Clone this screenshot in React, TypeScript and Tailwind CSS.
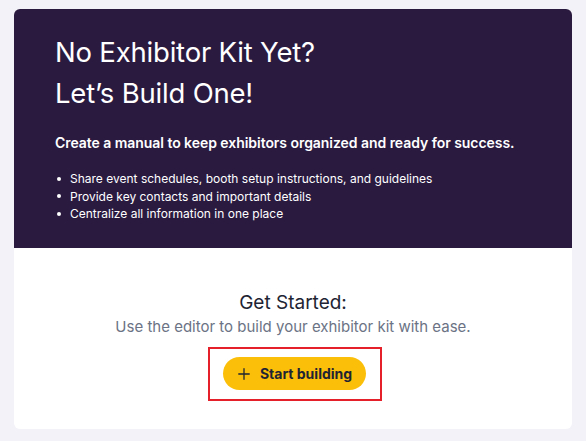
import React from 'react';

export default function App() {
  const bullets = [
    'Share event schedules, booth setup instructions, and guidelines',
    'Provide key contacts and important details',
    'Centralize all information in one place'
  ];
  return <div className="w-[586px] h-[441px] bg-[#f4f2f9] px-[14px] pt-[9px]" style={{ fontFamily: 'Inter, "Noto Sans", sans-serif' }}>
      <div className="rounded-md overflow-hidden bg-white">
        {/* Dark hero */}
        <div className="bg-[#2a1a3f] text-white h-[239px] pl-[41px] pt-[23px]">
          <h1 className="text-[27.5px] leading-[41px] font-normal tracking-[-0.2px]">
            No Exhibitor Kit Yet?<br />Let’s Build One!
          </h1>
          <p className="mt-[19px] text-[14px] leading-[20px] font-semibold tracking-[-0.05px]">Create a manual to keep exhibitors organized and ready for success.</p>
          <ul className="mt-[17px] text-[12px] leading-[17.5px]">
            {bullets.map(b => <li key={b} className="flex items-center">
                <span className="w-[4px] h-[4px] rounded-full bg-white ml-[2px] mr-[9px]"></span>
                {b}
              </li>)}
          </ul>
        </div>
        {/* Get started */}
        <div className="h-[181px] flex flex-col items-center pt-[43px]">
          <h2 className="text-[19px] leading-[24px] text-[#1e2433]">Get Started:</h2>
          <p className="mt-[2px] text-[15px] leading-[20px] text-[#6b7385]">Use the editor to build your exhibitor kit with ease.</p>
          <div className="mt-[10px] ml-[4px] border-2 border-[#e5202b] pl-[13px] pr-[14px] pt-[8px] pb-[9px]">
            <button className="flex items-center gap-[9px] h-[33px] px-[14px] rounded-full bg-[#fbbf0a] text-[#1e2433] text-[14px] font-bold">
              <svg className="w-[14px] h-[14px]" viewBox="0 0 24 24" fill="none" stroke="currentColor" strokeWidth="2.2" strokeLinecap="round"><path d="M12 3v18M3 12h18" /></svg>
              Start building
            </button>
          </div>
        </div>
      </div>
    </div>;
}
